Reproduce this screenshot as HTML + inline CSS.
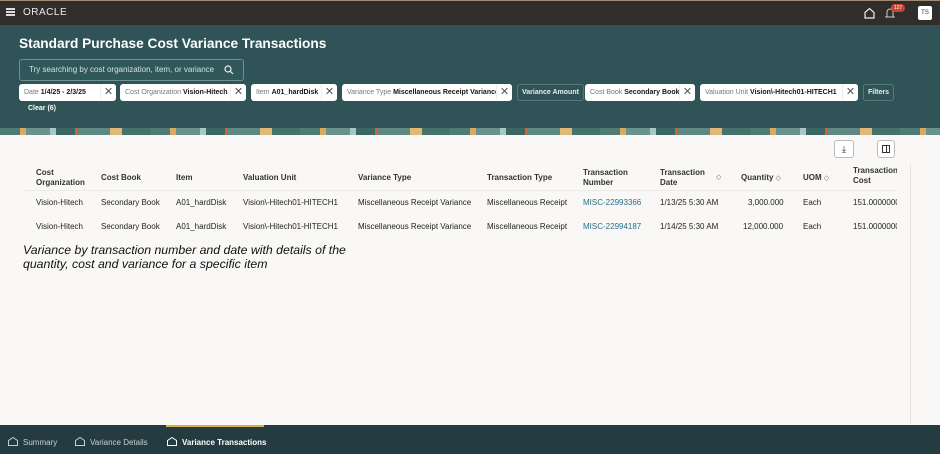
<!DOCTYPE html><html><head><style>
*{margin:0;padding:0;box-sizing:border-box}
body{width:940px;height:454px;overflow:hidden;background:#f9f8f6;font-family:"Liberation Sans",sans-serif;position:relative;color:#161513}
.top{position:absolute;left:0;top:0;width:940px;height:25px;background:#312d2a;border-top:1px solid #a08c70}
.hdr{position:absolute;left:0;top:25px;width:940px;height:103px;background:#2f5356}
.strip{position:absolute;left:0;top:128px;width:940px;height:7px;background:repeating-linear-gradient(90deg,#4f7b77 0 20px,#d9a95e 20px 26px,#6a928c 26px 50px,#a9c6c6 50px 56px,#3a6664 56px 75px,#c8683a 75px 77px,#5d8883 77px 110px,#e0b877 110px 122px,#46726e 122px 150px)}
.chip{position:absolute;top:84px;height:17px;background:#fff;border-radius:3px;font-size:7px;line-height:17px;padding-left:5px;white-space:nowrap;color:#161513;overflow:hidden}
.chip span{color:#777}.chip b{font-weight:bold}
.chip i{position:absolute;right:0;top:0;width:16px;text-align:center;background:#fff;font-style:normal;font-size:11px;color:#555;line-height:16px;border-left:1px solid #eee}
.obtn{position:absolute;top:84px;height:17px;border:1px solid #557a7b;border-radius:3px;color:#e8eeee;font-size:7px;font-weight:bold;line-height:15px;padding:0 4px}
.th{position:absolute;font-size:8px;font-weight:bold;line-height:10px;color:#333}
.td{position:absolute;font-size:8px;color:#222;white-space:nowrap}
.bot{position:absolute;left:0;top:425px;width:940px;height:29px;background:#243c41}
.tab{position:absolute;top:437px;font-size:8px;color:#c6d0d1}
.ico{display:inline-block;width:10px;height:9px;vertical-align:-1px;margin-right:5px}
.srt{font-size:7px;color:#666;font-weight:normal}
</style></head><body>
<div class="top"></div>
<div style="position:absolute;left:6px;top:8px;width:9px;height:1.5px;background:#ddd;box-shadow:0 3px 0 #ddd,0 6px 0 #ddd"></div>
<div style="position:absolute;left:23px;top:7px;font-size:10px;color:#eee;letter-spacing:.5px">ORACLE</div>
<svg style="position:absolute;left:864px;top:7px" width="11" height="12"><path d="M1 5.5L5.5 1.5L10 5.5V11H1Z" fill="none" stroke="#eee" stroke-width="1.2"/></svg>
<svg style="position:absolute;left:885px;top:7px" width="10" height="12"><path d="M2 9V5a3 3 0 0 1 6 0v4l1 1H1z" fill="none" stroke="#ccc" stroke-width="1"/></svg>
<div style="position:absolute;left:891px;top:4px;width:14px;height:8px;background:#c74634;border-radius:4px;font-size:5px;color:#fff;text-align:center;line-height:8px">127</div>
<div style="position:absolute;left:918px;top:6px;width:14px;height:14px;background:#fff;border-radius:2px;font-size:6px;text-align:center;line-height:14px;color:#333">TS</div>
<div class="hdr"></div>
<div style="position:absolute;left:19px;top:36px;font-size:13.7px;font-weight:bold;color:#fff">Standard Purchase Cost Variance Transactions</div>
<div style="position:absolute;left:19px;top:59px;width:225px;height:22px;border:1px solid #6f9192;border-radius:3px;background:#30585b;font-size:8px;color:#d6e0e0;line-height:20px;padding-left:9px">Try searching by cost organization, item, or variance
<svg style="position:absolute;left:204px;top:5px" width="10" height="10"><circle cx="4" cy="4" r="3" fill="none" stroke="#eee" stroke-width="1.2"/><path d="M6.3 6.3L9 9" stroke="#eee" stroke-width="1.2"/></svg></div>
<div class="chip" style="left:19px;width:97px"><span>Date</span> <b>1/4/25 - 2/3/25</b><i>✕</i></div>
<div class="chip" style="left:120px;width:126px"><span>Cost Organization</span> <b>Vision-Hitech</b><i>✕</i></div>
<div class="chip" style="left:251px;width:86px"><span>Item</span> <b>A01_hardDisk</b><i>✕</i></div>
<div class="chip" style="left:342px;width:170px"><span>Variance Type</span> <b>Miscellaneous Receipt Variance</b><i>✕</i></div>
<div class="obtn" style="left:517px">Variance Amount</div>
<div class="chip" style="left:585px;width:110px"><span>Cost Book</span> <b>Secondary Book</b><i>✕</i></div>
<div class="chip" style="left:700px;width:158px"><span>Valuation Unit</span> <b>Vision\-Hitech01-HITECH1</b><i>✕</i></div>
<div class="obtn" style="left:863px">Filters</div>
<div style="position:absolute;left:28px;top:105px;font-size:7px;font-weight:bold;color:#fff">Clear (6)</div>
<div class="strip"></div>
<div style="position:absolute;left:834px;top:140px;width:20px;height:18px;border:1px solid #bbb;border-radius:3px;background:#fff;font-size:9px;text-align:center;line-height:16px">⤓</div>
<div style="position:absolute;left:877px;top:140px;width:18px;height:18px;border:1px solid #bbb;border-radius:3px;background:#fff"><div style="position:absolute;left:4px;top:4px;width:8px;height:8px;border:1.3px solid #333"></div><div style="position:absolute;left:8px;top:4px;width:1.3px;height:8px;background:#333"></div></div>
<div style="position:absolute;left:910px;top:164px;width:1px;height:260px;background:#e5e3e0"></div>
<div style="position:absolute;left:22px;top:190px;width:875px;height:1px;background:#ecebe8"></div>
<div class="th" style="left:36px;top:168px">Cost<br>Organization</div>
<div class="th" style="left:101px;top:173px">Cost Book</div>
<div class="th" style="left:176px;top:173px">Item</div>
<div class="th" style="left:243px;top:173px">Valuation Unit</div>
<div class="th" style="left:358px;top:173px">Variance Type</div>
<div class="th" style="left:487px;top:173px">Transaction Type</div>
<div class="th" style="left:583px;top:168px">Transaction<br>Number</div>
<div class="th" style="left:660px;top:168px">Transaction<br>Date</div>
<div class="th srt" style="left:716px;top:173px">◇</div>
<div class="th" style="left:741px;top:173px">Quantity <span class="srt">◇</span></div>
<div class="th" style="left:803px;top:173px">UOM <span class="srt">◇</span></div>
<div style="position:absolute;left:853px;top:166px;width:44px;overflow:hidden"><div class="th" style="position:static">Transaction<br>Cost</div></div>
<div style="position:absolute;left:0;top:196px;width:897px;height:40px;overflow:hidden">
<div class="td" style="left:36px;top:2px">Vision-Hitech</div><div class="td" style="left:101px;top:2px">Secondary Book</div><div class="td" style="left:176px;top:2px">A01_hardDisk</div><div class="td" style="left:243px;top:2px">Vision\-Hitech01-HITECH1</div><div class="td" style="left:358px;top:2px">Miscellaneous Receipt Variance</div><div class="td" style="left:487px;top:2px">Miscellaneous Receipt</div><div class="td" style="left:583px;top:2px;color:#2b6d8a">MISC-22993366</div><div class="td" style="left:660px;top:2px">1/13/25 5:30 AM</div><div class="td" style="left:748px;top:2px">3,000.000</div><div class="td" style="left:803px;top:2px">Each</div><div class="td" style="left:853px;top:2px">151.0000000</div>
<div class="td" style="left:36px;top:26px">Vision-Hitech</div><div class="td" style="left:101px;top:26px">Secondary Book</div><div class="td" style="left:176px;top:26px">A01_hardDisk</div><div class="td" style="left:243px;top:26px">Vision\-Hitech01-HITECH1</div><div class="td" style="left:358px;top:26px">Miscellaneous Receipt Variance</div><div class="td" style="left:487px;top:26px">Miscellaneous Receipt</div><div class="td" style="left:583px;top:26px;color:#2b6d8a">MISC-22994187</div><div class="td" style="left:660px;top:26px">1/14/25 5:30 AM</div><div class="td" style="left:743px;top:26px">12,000.000</div><div class="td" style="left:803px;top:26px">Each</div><div class="td" style="left:853px;top:26px">151.0000000</div>
</div>
<div style="position:absolute;left:23px;top:243px;font-size:12.3px;font-style:italic;line-height:14px;color:#111">Variance by transaction number and date with details of the<br>quantity, cost and variance for a specific item</div>
<div class="bot"></div>
<div style="position:absolute;left:166px;top:425px;width:98px;height:2px;background:#d4b04a"></div>
<div class="tab" style="left:8px"><svg class="ico" viewBox="0 0 10 9"><path d="M.5 3.5L5 .5L9.5 3.5V8.5H.5Z" fill="none" stroke="#c6d0d1"/></svg>Summary</div>
<div class="tab" style="left:75px"><svg class="ico" viewBox="0 0 10 9"><path d="M.5 3.5L5 .5L9.5 3.5V8.5H.5Z" fill="none" stroke="#c6d0d1"/></svg>Variance Details</div>
<div class="tab" style="left:167px;color:#fff;font-weight:bold"><svg class="ico" viewBox="0 0 10 9"><path d="M.5 3.5L5 .5L9.5 3.5V8.5H.5Z" fill="none" stroke="#fff"/></svg>Variance Transactions</div>
</body></html>
